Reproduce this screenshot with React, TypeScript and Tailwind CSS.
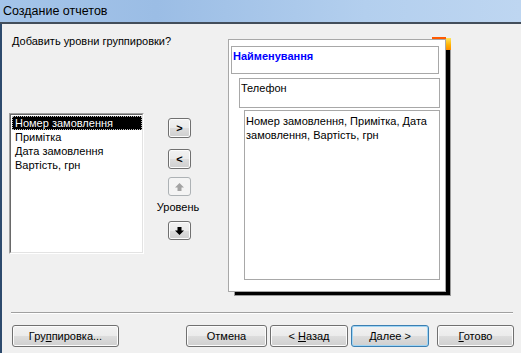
import React from "react";

const font = { fontFamily: '"Liberation Sans", Arial, sans-serif' };

function WinButton({
  children,
  className = "",
  isDefault = false,
  disabled = false,
}: {
  readonly children: React.ReactNode;
  readonly className?: string;
  readonly isDefault?: boolean;
  readonly disabled?: boolean;
}) {
  const border = disabled
    ? "border-[#adb2b5]"
    : isDefault
      ? "border-[#3c7fb1] shadow-[inset_0_0_0_1px_#9fd5f5]"
      : "border-[#707070] shadow-[inset_0_0_0_1px_#fcfcfc]";
  const bg = disabled
    ? "bg-[#f4f4f4]"
    : "bg-[linear-gradient(to_bottom,#f2f2f2_0%,#ebebeb_50%,#dddddd_51%,#cfcfcf_100%)]";
  return (
    <div
      className={`flex items-center justify-center rounded-[3px] border text-[11px] text-black ${border} ${bg} ${className}`}
    >
      {children}
    </div>
  );
}

function Arrow({ down = false, color }: { readonly down?: boolean; readonly color: string }) {
  return (
    <svg width="9" height="8" viewBox="0 0 9 8" className={down ? "rotate-180" : ""}>
      <path d="M4.5 0 L9 4.5 H6.5 V8 H2.5 V4.5 H0 Z" fill={color} />
    </svg>
  );
}

const listItems = ["Номер замовлення", "Примітка", "Дата замовлення", "Вартість, грн"];

export default function App() {
  return (
    <div
      className="relative flex h-[353px] w-[521px] flex-col overflow-hidden bg-[#f0f0f0] text-[11px] text-black"
      style={font}
    >
      {/* title bar */}
      <div className="flex h-[22px] items-center bg-[linear-gradient(to_right,#a4c4e9_0%,#9bbde5_30%,#b3cfee_70%,#bed6f1_100%)] pl-[3px]">
        <span className="text-[12.5px] leading-none text-black">Создание отчетов</span>
      </div>
      <div className="h-[2px] bg-[#434e5b]" />

      <div className="flex flex-1 border-l-2 border-[#2d4a6d]">
        <div className="flex flex-1 flex-col">
          <div className="flex h-[288px]">
            {/* left column */}
            <div className="ml-[7px] flex w-[135px] flex-col">
              <p className="mt-[10px] ml-[3px] whitespace-nowrap leading-[14px]">
                Добавить уровни группировки?
              </p>
              <div className="mt-[65px] h-[141px] w-[135px] border border-t-[#a0a0a0] border-l-[#a0a0a0] border-r-white border-b-white">
                <div className="h-full w-full border border-t-[#696969] border-l-[#696969] border-r-[#e3e3e3] border-b-[#e3e3e3] bg-white pl-px pt-px">
                  {listItems.map((item, i) => (
                    <div
                      key={item}
                      className={`h-[14px] whitespace-nowrap pl-[2px] leading-[12px] ${
                        i === 0
                          ? "border border-dotted border-[#bdbdbd] bg-black text-white"
                          : "border border-transparent"
                      }`}
                    >
                      {item}
                    </div>
                  ))}
                </div>
              </div>
            </div>

            {/* mid column */}
            <div className="ml-[11px] flex w-[46px] flex-col items-center">
              <WinButton className="mt-[94px] ml-[3px] h-[20px] w-[23px] font-bold">&gt;</WinButton>
              <WinButton className="mt-[11px] ml-[3px] h-[20px] w-[23px] font-bold">&lt;</WinButton>
              <WinButton disabled className="mt-[8px] ml-[3px] h-[19px] w-[23px]">
                <Arrow color="#a3a3a3" />
              </WinButton>
              <span className="mt-[4px] leading-[14px]">Уровень</span>
              <WinButton className="mt-[7px] ml-[3px] h-[19px] w-[23px]">
                <Arrow down color="#000" />
              </WinButton>
            </div>

            {/* preview */}
            <div className="relative ml-[27px] mt-[15px] h-[257px] w-[224px]">
              <div className="absolute left-[6px] top-[6px] h-[251px] w-[217px] border border-[#9a9a9a] bg-black" />
              <div className="absolute left-[204px] top-[-2px] h-[2px] w-[14px] bg-[#ff5a00]" />
              <div className="absolute left-[218px] top-[-1px] h-[12px] w-[5px] bg-[linear-gradient(to_bottom,#ffe45c,#ffb100_60%,#ff8a00)]" />
              <div className="relative flex h-[253px] w-[218px] flex-col border border-[#a8a8a8] bg-white">
                <div className="ml-[2px] mt-[6px] h-[28px] w-[208px] border border-[#a8a8a8] pl-[1px] pt-[3px] font-bold leading-[12px] text-[#0000ff]">
                  Найменування
                </div>
                <div className="ml-[10px] mt-[4px] h-[30px] w-[201px] border border-[#a8a8a8] pl-[1px] pt-[3px] leading-[12px]">
                  Телефон
                </div>
                <div className="ml-[15px] mt-[2px] h-[170px] w-[196px] border border-[#a8a8a8] pl-[1px] pt-[3px] leading-[14px]">
                  Номер замовлення, Примітка, Дата
                  <br />
                  замовлення, Вартість, грн
                </div>
              </div>
            </div>
          </div>

          {/* separator */}
          <div className="ml-[9px] mr-[8px] h-[2px] border-t border-b border-t-[#a0a0a0] border-b-white" />

          {/* buttons */}
          <div className="mt-[11px] flex">
            <WinButton className="ml-[10px] h-[22px] w-[107px]">
              <span>
                Гру<span className="underline">п</span>пировка...
              </span>
            </WinButton>
            <WinButton className="ml-[67px] h-[22px] w-[81px]">Отмена</WinButton>
            <WinButton className="ml-[3px] h-[22px] w-[78px]">
              <span>
                &lt; <span className="underline">Н</span>азад
              </span>
            </WinButton>
            <WinButton isDefault className="ml-[3px] h-[22px] w-[78px]">
              <span>
                <span className="underline">Д</span>алее &gt;
              </span>
            </WinButton>
            <WinButton className="ml-[8px] h-[22px] w-[77px]">
              <span>
                <span className="underline">Г</span>отово
              </span>
            </WinButton>
          </div>
        </div>
      </div>
    </div>
  );
}
